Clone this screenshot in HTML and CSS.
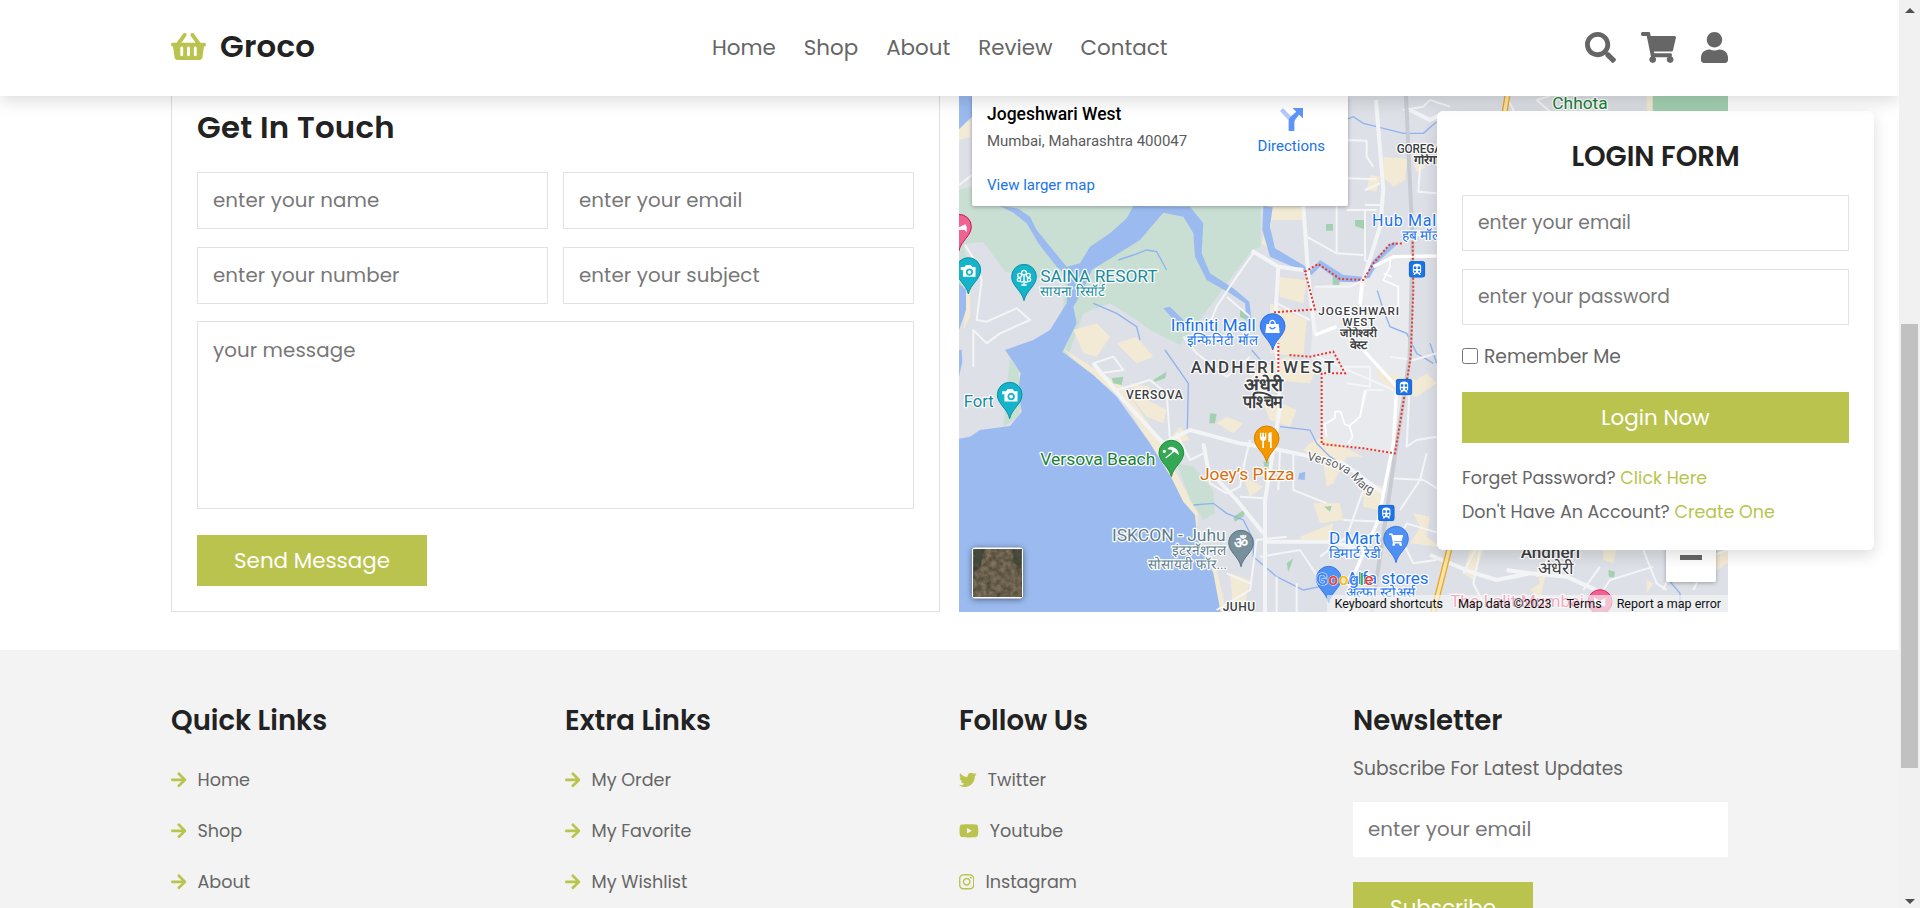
FILE: index.html
```html
<!DOCTYPE html>
<html lang="en">
<head>
<meta charset="utf-8">
<title>Groco</title>
<link rel="stylesheet" href="styles.css">
</head>
<body>
<svg class="defs" width="0" height="0" aria-hidden="true">
  <symbol id="arrow" viewBox="0 0 448 512"><path d="M190.5 66.9l22.2-22.2c9.4-9.4 24.6-9.4 33.9 0L441 239c9.4 9.4 9.4 24.6 0 33.9L246.6 467.3c-9.4 9.4-24.6 9.4-33.9 0l-22.2-22.2c-9.5-9.5-9.3-25 .4-34.3L311.4 296H24c-13.3 0-24-10.7-24-24v-32c0-13.3 10.7-24 24-24h287.4L190.9 101.2c-9.8-9.3-10-24.8-.4-34.3z"/></symbol>
  <symbol id="pin" viewBox="-38 -38 76 112" overflow="visible"><path d="M0 72C-6 42-37 28-37 0A37 37 0 0 1 37 0C37 28 6 42 0 72z"/></symbol>
  <symbol id="camera" viewBox="-24 -24 48 48"><path fill="#fff" fill-rule="evenodd" d="M-20-10H-10L-5-16H8L12-10H21V17H-14V-2H-20zM4-6a10 10 0 1 0 .1 0zM4-1a5 5 0 1 1-.1 0z"/></symbol>
  <symbol id="train" viewBox="0 0 48 48"><rect x="1" y="1" width="46" height="46" rx="8" fill="#1a73e8" stroke="#1558b8" stroke-width="2"/><path fill="#fff" fill-rule="evenodd" d="M12 16Q12 8 24 8T36 16V30Q36 34 32 35L35 40H30L27 36H21L18 40H13L16 35Q12 34 12 30zM15 16V23H22V16zM26 16V23H33V16zM18 27a3 3 0 1 0 .1 0zM30 27a3 3 0 1 0 .1 0z"/></symbol>
  <symbol id="cart" viewBox="0 0 576 512"><path d="M528.12 301.319l47.273-208C578.806 78.301 567.391 64 551.99 64H159.208l-9.166-44.81C147.758 8.021 137.93 0 126.529 0H24C10.745 0 0 10.745 0 24v16c0 13.255 10.745 24 24 24h69.883l70.248 343.435C147.325 417.1 136 435.222 136 456c0 30.928 25.072 56 56 56s56-25.072 56-56c0-15.674-6.447-29.835-16.824-40h209.647C430.447 426.165 424 440.326 424 456c0 30.928 25.072 56 56 56s56-25.072 56-56c0-22.172-12.888-41.332-31.579-50.405l5.517-24.276c3.413-15.018-8.002-29.319-23.403-29.319H218.117l-6.545-32h293.145c11.206 0 20.92-7.754 23.403-18.681z"/></symbol>
</svg>

<div class="page">
  <header class="header">
    <a class="logo"><svg class="logo-icon" viewBox="0 0 576 512"><path d="M576 216v16c0 13.255-10.745 24-24 24h-8l-26.113 182.788C514.509 462.435 494.257 480 470.37 480H105.63c-23.887 0-44.139-17.565-47.518-41.212L32 256h-8c-13.255 0-24-10.745-24-24v-16c0-13.255 10.745-24 24-24h67.341l106.78-146.821c10.395-14.292 30.407-17.453 44.701-7.058 14.293 10.395 17.453 30.408 7.058 44.701L170.477 192h235.046L326.12 82.821c-10.395-14.292-7.234-34.306 7.059-44.701 14.291-10.395 34.306-7.235 44.701 7.058L484.659 192H552c13.255 0 24 10.745 24 24zM312 392V280c0-13.255-10.745-24-24-24s-24 10.745-24 24v112c0 13.255 10.745 24 24 24s24-10.745 24-24zm112 0V280c0-13.255-10.745-24-24-24s-24 10.745-24 24v112c0 13.255 10.745 24 24 24s24-10.745 24-24zm-224 0V280c0-13.255-10.745-24-24-24s-24 10.745-24 24v112c0 13.255 10.745 24 24 24s24-10.745 24-24z"/></svg><span>Groco</span></a>
    <nav class="nav"><a>Home</a><a>Shop</a><a>About</a><a>Review</a><a>Contact</a></nav>
    <div class="icons">
      <svg class="icon-search" viewBox="0 0 512 512"><path d="M505 442.7L405.3 343c-4.5-4.5-10.6-7-17-7H372c27.6-35.3 44-79.7 44-128C416 93.1 322.9 0 208 0S0 93.1 0 208s93.1 208 208 208c48.3 0 92.7-16.4 128-44v16.3c0 6.4 2.5 12.5 7 17l99.7 99.7c9.4 9.4 24.6 9.4 33.9 0l28.3-28.3c9.4-9.4 9.4-24.6.1-34zM208 336c-70.7 0-128-57.2-128-128 0-70.7 57.2-128 128-128 70.7 0 128 57.2 128 128 0 70.7-57.2 128-128 128z"/></svg>
      <svg class="icon-cart" viewBox="0 0 576 512"><use href="#cart"/></svg>
      <svg class="icon-user" viewBox="0 0 448 512"><path d="M224 256c70.7 0 128-57.3 128-128S294.7 0 224 0 96 57.3 96 128s57.3 128 128 128zm89.6 32h-16.7c-22.2 10.2-46.9 16-72.9 16s-50.6-5.8-72.9-16h-16.7C60.2 288 0 348.2 0 422.4V464c0 26.5 21.5 48 48 48h352c26.5 0 48-21.5 48-48v-41.6c0-74.2-60.2-134.4-134.4-134.4z"/></svg>
    </div>
  </header>

  <main class="main">
    <section class="contact">
      <form class="contact-form">
        <h3 class="contact-title">Get In Touch</h3>
        <div class="fields">
          <input class="box" placeholder="enter your name">
          <input class="box" placeholder="enter your email">
          <input class="box" placeholder="enter your number">
          <input class="box" placeholder="enter your subject">
        </div>
        <textarea class="box message" placeholder="your message"></textarea>
        <button class="btn" type="button">Send Message</button>
      </form>

      <div class="map">
        <svg class="map-canvas" viewBox="27 18 2307 1548" preserveAspectRatio="none">
          <rect x="27" y="18" width="2307" height="1548" fill="#dde0e6"/>
          <!-- mangrove greens -->
          <path fill="#cadfd3" d="M27 300L60 290 160 320H932V470L905 482 740 702 690 765 620 735 560 690 480 640 400 670 350 810H27z"/>
          <path fill="#dde0e6" d="M40 462L100 456 165 545 250 560 345 575 335 690 250 760 180 790 190 830 27 830V700L60 650 66 560z"/>
          <path fill="#dde0e6" d="M400 720L440 690 600 720 700 770 740 900 480 830 370 790z"/>
          <path fill="#e8eaee" d="M1090 590L1240 570 1320 500H1390L1385 650 1350 1000 1320 1090 1115 1060V850L1080 800 1090 700z"/>
          <!-- beach and built-up blocks -->
          <g fill="#f2ead4">
            <path d="M330 770L440 840 520 890 630 1050 700 1190 745 1250 740 1330 800 1440 830 1566H800L770 1400 725 1290 640 1130 520 930 420 850z"/>
            <path d="M27 90L62 95 60 140 27 150zM50 590L62 600 60 680 40 720z"/>
            <path d="M370 720L440 700 480 740 440 800 400 790zM500 760L560 740 610 800 560 820zM540 880L600 890 590 930 650 960 640 1000 590 980 550 930z"/>
            <path d="M960 350H1060V390H965L960 480 935 460zM980 560L1070 570 1060 640 990 620zM960 640L1070 690 1060 800 960 790zM900 850L1010 800 1100 830 1080 880 960 870 950 920 1040 960 1020 1010 960 990z"/>
            <path d="M1300 200L1372 208 1365 270 1330 290 1300 262zM1260 255L1290 260 1280 305 1250 300zM1390 220L1430 230 1400 245z"/>
            <path d="M1270 840L1400 870 1430 850 1460 880 1400 920 1320 900zM1080 1060L1120 1040 1240 1100 1190 1100 1150 1180 1130 1190 1120 1120 1060 1080zM1240 1180L1310 1190 1290 1260 1240 1250zM1090 1240L1170 1240 1180 1290 1110 1300zM1050 1340L1150 1300 1140 1350 1060 1360zM1390 1270L1440 1280 1430 1340 1470 1370 1380 1360 1410 1310zM880 1160L940 1190 900 1220zM840 1450L900 1470 880 1566H850zM630 1080L690 1010 720 1050 670 1060zM830 980L880 1000 850 1030 800 1000z"/>
            <path d="M2090 18H2110V70H2090zM1990 70L2050 70 2030 100H1990zM1560 1380L1600 1380 1570 1470 1540 1450zM1740 1500L1770 1480 1760 1430 1790 1440 1770 1530zM1960 1380L2000 1370 1990 1420 1960 1410zM2090 1470L2110 1480 2090 1510zM2290 1390L2334 1380V1420L2300 1440z"/>
          </g>
          <g fill="#a3d0af"><path d="M1128 402h21v20h-21zM1215 390h28v28l-28-10zM1148 560h20v25h-20zM610 870L650 845 645 865 615 875zM485 865L520 860 515 885 490 880zM780 970L800 972 795 1000 778 1000zM940 1115H965V1137H945zM850 1280L890 1255 880 1280 855 1295zM1122 1250L1145 1248 1140 1265zM1010 1420L1030 1405 1015 1445zM870 660L890 665 888 690 870 680zM1975 1440L1995 1445 1992 1463 1977 1460z"/><path d="M2108 18H2334V100H2108z" fill="#a5d1b2"/></g>
          <path fill="#cadfd3" d="M680 1120L730 1130 790 1200 795 1270 760 1290 720 1230zM180 800L230 810 205 850 222 920 205 980 160 1010 170 900z"/>
          <!-- sea and creeks -->
          <path fill="#9bbbf0" d="M165 780L330 780 430 855 500 920 600 1060 665 1165 700 1235 735 1275 740 1330 790 1450 812 1566H27V1046L60 1040 90 1020 180 1008 215 965 205 900 212 850 190 815z"/>
          <path fill="#9bbbf0" d="M27 18H66V80L27 118zM550 348L530 385 480 430 420 470 390 520 350 530 260 420 240 380 205 356 150 348 190 368 230 400 265 460 320 530 355 560 350 640 300 720 250 750 165 780 330 800 380 700 370 650 400 600 425 540 490 500 570 450 640 368 700 380 730 430 735 500 770 570 840 610 885 640 890 700 905 690 898 635 850 595 780 550 755 490 760 400 720 350zM940 348L968 352 960 410 975 475 1085 540 1110 510 1180 555 1240 560 1270 510 1330 455 1345 460 1290 510 1260 560 1225 577 1170 575 1110 530 1085 555 960 500 937 420zM640 655L660 650 710 700 690 710zM27 580L48 600V660L27 720zM27 780H35L37 815 27 860zM1048 1150L1066 1145 1064 1170 1044 1168z"/>
          <g fill="none" stroke="#8fb3ef" stroke-width="4">
            <path d="M505 510L550 495 590 480 620 485 650 540M430 640L500 670 560 710 570 750M645 780L715 880 712 1020M905 780L940 820M990 1010L1080 1020 1100 1060 1140 1100 1200 1140M730 1245L790 1240 830 1270 880 1290 910 1350 910 1400 980 1460 1060 1500 1110 1490M1190 88L1210 80 1240 100 1300 115 1360 130 1420 130 1460 95M1282 602L1300 660 1320 710 1370 730 1400 790 1450 820M1235 568L1260 560M2160 1475L2190 1510V1566M1440 760L1460 820"/>
          </g>
          <!-- minor roads -->
          <g fill="none" stroke="#f4f5f7" stroke-width="6" stroke-linejoin="round">
            <path d="M27 285L66 255M45 465L80 520 95 570 80 690 110 695 200 655 240 690 150 730 110 760 70 720V830M430 820L490 800 520 840 450 850zM500 900L600 870 650 910 660 1050M780 700L800 650 860 560 910 490M700 740L740 790 830 860 900 800M830 620L900 680M1070 440L1160 490 1240 495M1160 348V490M1190 150L1250 152 1250 200 1270 230M1190 265L1280 268M1245 300L1290 280M1245 345H1290M1190 360H1280M1245 360V510L1260 520M1360 60L1420 50 1440 30 1500 50M1410 230L1405 305 1460 310M1360 430L1450 440M1095 590L1200 590 1240 570M1095 735L1150 710M1100 800L1240 860 1330 900M980 640L1080 690M760 1060L780 1180 830 1210 870 1190 890 1090M680 1030L720 1110 760 1090M870 1220L940 1225M900 1050L880 1130M990 1080L985 1200M1030 1090V1200L1130 1240M800 1560L900 1500 920 1350 1010 1340M900 1480L830 1450M930 1400L1050 1380 1110 1470M980 1566V1460M1040 1566V1480M1110 1400L1190 1340 1240 1200M1180 1290L1300 1295M1190 880L1260 890 1260 830 1180 830M1320 800L1390 810 1460 790M1380 870L1370 1070 1400 1050 1460 1040M1320 1165L1420 1170 1470 1200M1350 1260L1410 1170 1430 1090M1345 1350L1370 1300 1470 1330M1360 1360L1390 1420 1460 1410M1250 900L1300 900M1250 900L1230 980"/>
            <path d="M1540 1450L1580 1370M1590 1380L1570 1480 1600 1540M1760 1460L1810 1380M1900 1500L1950 1430M1960 1500L1980 1470 2110 1430M2080 1380L2120 1480 2150 1500M2160 1450L2140 1500M2230 1500L2280 1400 2334 1380M1710 100L1670 20M1830 90L1760 30 1800 18M1990 80L2050 70"/>
          </g>
          <g stroke="#c8cbd1" stroke-width="12" fill="none"><path d="M1368 18L1376 200 1388 450 1380 800 1340 1060 1320 1200 1290 1400 1265 1566"/></g>
          <g stroke="#f3f4f6" stroke-width="12" fill="none" stroke-linejoin="round">
            <path d="M1278 30L1300 300 1290 410 1240 570 1230 640M1060 348L1075 560 1095 735M985 530L975 700 990 950 970 1080 945 1230V1566M430 820L520 930 640 1060 720 1020 870 1060 990 1080 1180 1120 1300 1210M760 1060L775 1140 860 1230 940 1330M940 1355H1140L1240 1380M905 482L985 530 1060 540M1440 1395L1560 1445 1640 1470 1740 1450 1850 1460 1960 1510M1670 1440L1740 1450M1380 60L1440 90 1480 70"/>
          </g>
          <g stroke="#fff" stroke-width="10" fill="none" stroke-linejoin="round"><path d="M1240 780L1340 890 1330 1060 1310 1160 1285 1290 1200 1480 1190 1566M1095 735L1160 710M1235 580L1230 650M1270 530L1330 500 1460 498"/></g>
          <g stroke="#fff" stroke-width="5" fill="none" stroke-linejoin="round"><path d="M1320 500V530L1300 570 1345 590V670M1300 550L1325 560M1130 1040L1124 1002 1155 985V965H1172L1184 1003 1198 1008 1230 980 1245 900M1198 1008L1208 1040 1195 1060"/></g>
          <g stroke="#e8a825" fill="none" stroke-width="18"><path d="M1505 1350L1450 1566M1672 18L1655 120"/></g>
          <g stroke="#fbe4a9" fill="none" stroke-width="10"><path d="M1505 1350L1450 1566M1672 18L1655 120"/></g>
          <path fill="none" stroke="#e8372c" stroke-width="6" stroke-dasharray="6 6" d="M1388 455L1390 600 1382 800 1350 1000 1335 1090 1240 1075 1115 1062V850H1185L1150 785 1080 800 1015 795M985 870V760M972 667L1095 658 1065 545 1105 522 1170 567 1240 570 1270 520 1320 462 1360 460"/>

          <!-- place labels -->
          <g class="label" font-size="48">
            <g fill="#188a9c"><text x="271" y="577" textLength="352" lengthAdjust="spacingAndGlyphs">SAINA RESORT</text><text x="270" y="618" font-size="41" textLength="195" lengthAdjust="spacingAndGlyphs">सायना रिसॉर्ट</text><text x="41" y="950" textLength="90" lengthAdjust="spacingAndGlyphs">Fort</text></g>
            <g fill="#1a73e8"><text x="662" y="722" textLength="255" lengthAdjust="spacingAndGlyphs">Infiniti Mall</text><text x="710" y="764" font-size="41" textLength="214" lengthAdjust="spacingAndGlyphs">इन्फिनिटी मॉल</text><text x="1266" y="407" textLength="206">Hub Mall</text><text x="1355" y="450" font-size="41" textLength="118" lengthAdjust="spacingAndGlyphs">हब मॉल</text><text x="1137" y="1362" textLength="154" lengthAdjust="spacingAndGlyphs">D Mart</text><text x="1137" y="1404" font-size="41" textLength="158" lengthAdjust="spacingAndGlyphs">डिमार्ट रेडी</text></g>
            <g fill="#188038"><text x="271" y="1125" textLength="345" lengthAdjust="spacingAndGlyphs">Versova Beach</text><text x="1807" y="58" textLength="166" lengthAdjust="spacingAndGlyphs">Chhota</text></g>
            <text fill="#d56e0c" x="750" y="1170" textLength="283" lengthAdjust="spacingAndGlyphs">Joey’s Pizza</text>
            <g fill="#607d8b"><text x="486" y="1353" textLength="341" lengthAdjust="spacingAndGlyphs">ISKCON - Juhu</text><text x="667" y="1396" font-size="41" textLength="162" lengthAdjust="spacingAndGlyphs">इंटरनॅशनल</text><text x="595" y="1436" font-size="41" textLength="236" lengthAdjust="spacingAndGlyphs">सोसायटी फॉर...</text></g>
            <g fill="#3c4043" font-weight="500">
              <text x="1105" y="674" font-size="35" textLength="242">JOGESHWARI</text><text x="1170" y="742" font-size="35" font-weight="600" textLength="110" lengthAdjust="spacingAndGlyphs">जोगेश्वरी</text><text x="1199" y="776" font-size="35" font-weight="600" textLength="54" lengthAdjust="spacingAndGlyphs">वेस्ट</text><text x="1177" y="708" font-size="35" textLength="98">WEST</text>
              <text x="881" y="902" font-size="54" font-weight="600" textLength="120" lengthAdjust="spacingAndGlyphs">अंधेरी</text><text x="722" y="850" font-size="51" textLength="431">ANDHERI WEST</text><text x="879" y="953" font-size="54" font-weight="600" textLength="121" lengthAdjust="spacingAndGlyphs">पश्चिम</text>
              <text x="528" y="927" font-size="36" textLength="170">VERSOVA</text><text x="818" y="1564" font-size="36" textLength="97">JUHU</text>
              <text x="1392" y="222" font-size="37" font-weight="600">गोरेगाव</text><text x="1340" y="189" font-size="36" textLength="160">GOREGAO</text>
              <text x="1712" y="1403" font-size="50" textLength="178" lengthAdjust="spacingAndGlyphs">Andheri</text><text x="1763" y="1453" font-size="50" textLength="108" lengthAdjust="spacingAndGlyphs">अंधेरी</text>
            </g>
            <path id="marg" fill="none" stroke="none" d="M1070 1110Q1180 1132 1210 1170T1272 1215"/>
            <text fill="#5f6368" font-size="37"><textPath href="#marg" textLength="226">Versova Marg</textPath></text>
          </g>

          <g stroke-width="3">
            <use href="#pin" x="-11" y="372" width="76" height="112" fill="#f06292" stroke="#c2185b"/>
            <path fill="#fff" stroke="none" d="M27 412L46 403 50 410V427L44 420H27z"/>
            <use href="#pin" x="17" y="502" width="76" height="112" fill="#14b4cb" stroke="#0e8fa3"/><use href="#camera" x="28" y="516" width="52" height="52"/>
            <use href="#pin" x="184" y="522" width="76" height="112" fill="#14b4cb" stroke="#0e8fa3"/>
            <use href="#pin" x="141" y="876" width="76" height="112" fill="#14b4cb" stroke="#0e8fa3"/><use href="#camera" x="152" y="888" width="54" height="54"/>
            <use href="#pin" x="930" y="670" width="76" height="112" fill="#4285f4" stroke="#2f6fd8"/>
            <use href="#pin" x="626" y="1050" width="76" height="112" fill="#34a853" stroke="#1e8e3e"/>
            <use href="#pin" x="912" y="1007" width="76" height="112" fill="#f29900" stroke="#d67e00"/>
            <use href="#pin" x="835" y="1320" width="76" height="112" fill="#78909c" stroke="#5c7480"/>
            <use href="#pin" x="1300" y="1308" width="76" height="112" fill="#4f90f5" stroke="#3c7be0"/>
            <use href="#pin" x="1098" y="1428" width="76" height="112" fill="#4f90f5" stroke="#3c7be0"/>
          </g>
          <g fill="none" stroke="#fff" stroke-width="4">
            <circle cx="222" cy="548" r="7"/><circle cx="209" cy="556" r="6"/><circle cx="235" cy="556" r="6"/><circle cx="207" cy="569" r="5"/><circle cx="237" cy="569" r="5"/><path d="M222 556V584M211 575Q222 578 222 570Q224 580 234 575M214 585H230"/>
            <path fill="#fff" stroke="none" d="M949 702H986L989 729H946z"/><path d="M959 703Q959 691 967 691T976 703"/><path stroke="#4285f4" d="M959 711Q967 722 976 711"/>
            <path fill="#fff" stroke="none" d="M930 1028h4v12h3v-12h5v12h3v-12h4v18q-2 6-7 7v21h-5v-21q-7-2-7-9zM955 1030q3-3 10-3v47h-5v-19h-5z"/>
            <path fill="#fff" stroke="none" d="M652 1078Q656 1068 668 1071Q686 1076 687 1096L673 1085 668 1086 664 1079z"/><path d="M674 1082L647 1104"/><circle cx="643" cy="1084" r="3" fill="#fff"/>
          </g>
          <text x="873" y="1373" fill="#fff" text-anchor="middle" font-size="46" font-weight="700">ॐ</text>
          <use href="#cart" x="1317" y="1329" width="42" height="40" fill="#fff"/>
          <use href="#train" x="1376" y="513" width="50" height="50"/><use href="#train" x="1337" y="866" width="50" height="50"/><use href="#train" x="1284" y="1244" width="50" height="50"/>
          <g class="label" font-size="48" fill="#1a73e8"><text x="1187" y="1522" font-size="41" textLength="208" lengthAdjust="spacingAndGlyphs">अल्फा स्टोअर्स</text><text x="1190" y="1483" textLength="246" lengthAdjust="spacingAndGlyphs">Alfa stores</text></g>
          <text class="label" x="1500" y="1550" font-size="52" fill="#e91e63" textLength="402" lengthAdjust="spacingAndGlyphs">The Lalit Mumbai</text>
          <circle cx="1950" cy="1535" r="36" fill="#f06292" stroke="#e91e63" stroke-width="3"/>
          <path fill="#fff" d="M1932 1522L1950 1532 1966 1524V1548H1932z"/>
          <text class="google" x="1098" y="1484" font-size="52" font-weight="500" textLength="173"><tspan fill="#4285f4">G</tspan><tspan fill="#ea4335">o</tspan><tspan fill="#fbbc04">o</tspan><tspan fill="#4285f4">g</tspan><tspan fill="#34a853">l</tspan><tspan fill="#ea4335">e</tspan></text>
        </svg>
        <div class="place-card">
          <div class="place-text"><strong>Jogeshwari West</strong><span>Mumbai, Maharashtra 400047</span><a>View larger map</a></div>
          <a class="directions"><svg viewBox="0 0 24 24"><path fill="#b4cafb" d="M0 3L3 0 12 9 9 13z"/><path fill="#5e94fa" d="M13 0h11v11l-4-4-4 5q-1 1-1 3v9H9v-10q0-3 2-5l6-5z"/></svg>Directions</a>
        </div>
        <svg class="satellite" viewBox="0 0 52 52"><defs><filter id="ground" x="0" y="0" width="1" height="1" color-interpolation-filters="sRGB"><feTurbulence type="fractalNoise" baseFrequency=".2" numOctaves="4" seed="4"/><feColorMatrix values=".3 0 0 0 .26 .28 0 0 0 .23 .25 0 0 0 .17 0 0 0 0 1"/></filter></defs><rect width="52" height="52" rx="3" fill="#fff"/><rect x="2" y="2" width="48" height="48" filter="url(#ground)"/><path fill="#2c3c31" opacity=".6" d="M2 2H13L8 20 2 26zM41 2H50V22L43 16z"/></svg>
        <div class="zoom-out"><i></i></div>
        <div class="credits"><span>Keyboard shortcuts</span><span>Map data ©2023</span><span>Terms</span><span>Report a map error</span></div>
      </div>
    </section>

    <footer class="footer">
      <div class="column"><h3>Quick Links</h3>
        <a><svg class="i-arrow"><use href="#arrow"/></svg><span>Home</span></a><a><svg class="i-arrow"><use href="#arrow"/></svg><span>Shop</span></a><a><svg class="i-arrow"><use href="#arrow"/></svg><span>About</span></a></div>
      <div class="column"><h3>Extra Links</h3>
        <a><svg class="i-arrow"><use href="#arrow"/></svg><span>My Order</span></a><a><svg class="i-arrow"><use href="#arrow"/></svg><span>My Favorite</span></a><a><svg class="i-arrow"><use href="#arrow"/></svg><span>My Wishlist</span></a></div>
      <div class="column"><h3>Follow Us</h3>
        <a><svg class="i-twitter" viewBox="0 0 512 512"><path d="M459.37 151.716c.325 4.548.325 9.097.325 13.645 0 138.72-105.583 298.558-298.558 298.558-59.452 0-114.68-17.219-161.137-47.106 8.447.974 16.568 1.299 25.34 1.299 49.055 0 94.213-16.568 130.274-44.832-46.132-.975-84.792-31.188-98.112-72.772 6.498.974 12.995 1.624 19.818 1.624 9.421 0 18.843-1.3 27.614-3.573-48.081-9.747-84.143-51.98-84.143-102.985v-1.299c13.969 7.797 30.214 12.67 47.431 13.319-28.264-18.843-46.781-51.005-46.781-87.391 0-19.492 5.197-37.36 14.294-52.954 51.655 63.675 129.3 105.258 216.365 109.807-1.624-7.797-2.599-15.918-2.599-24.04 0-57.828 46.782-104.934 104.934-104.934 30.213 0 57.502 12.67 76.67 33.137 23.715-4.548 46.456-13.32 66.599-25.34-7.798 24.366-24.366 44.833-46.132 57.827 21.117-2.273 41.584-8.122 60.426-16.243-14.292 20.791-32.161 39.308-52.628 54.253z"/></svg><span>Twitter</span></a>
        <a><svg class="i-youtube" viewBox="0 0 576 512"><path d="M549.655 124.083c-6.281-23.65-24.787-42.276-48.284-48.597C458.781 64 288 64 288 64S117.22 64 74.629 75.486c-23.497 6.322-42.003 24.947-48.284 48.597-11.412 42.867-11.412 132.305-11.412 132.305s0 89.438 11.412 132.305c6.281 23.65 24.787 41.5 48.284 47.821C117.22 448 288 448 288 448s170.78 0 213.371-11.486c23.497-6.321 42.003-24.171 48.284-47.821 11.412-42.867 11.412-132.305 11.412-132.305s0-89.438-11.412-132.305zm-317.51 213.508V175.185l142.739 81.205-142.739 81.201z"/></svg><span>Youtube</span></a>
        <a><svg class="i-instagram" viewBox="0 0 448 512"><path d="M224.1 141c-63.6 0-114.9 51.3-114.9 114.9s51.3 114.9 114.9 114.9S339 319.5 339 255.9 287.7 141 224.1 141zm0 189.6c-41.1 0-74.7-33.5-74.7-74.7s33.5-74.7 74.7-74.7 74.7 33.5 74.7 74.7-33.6 74.7-74.7 74.7zm146.4-194.3c0 14.9-12 26.8-26.8 26.8-14.9 0-26.8-12-26.8-26.8s12-26.8 26.8-26.8 26.8 12 26.8 26.8zm76.1 27.2c-1.7-35.9-9.9-67.7-36.2-93.9-26.2-26.2-58-34.4-93.9-36.2-37-2.1-147.9-2.1-184.9 0-35.8 1.7-67.6 9.9-93.9 36.1s-34.4 58-36.2 93.9c-2.1 37-2.1 147.9 0 184.9 1.7 35.9 9.9 67.7 36.2 93.9s58 34.4 93.9 36.2c37 2.1 147.9 2.1 184.9 0 35.9-1.7 67.7-9.9 93.9-36.2 26.2-26.2 34.4-58 36.2-93.9 2.1-37 2.1-147.8 0-184.8zM398.8 388c-7.8 19.6-22.9 34.7-42.6 42.6-29.5 11.7-99.5 9-132.1 9s-102.7 2.6-132.1-9c-19.6-7.8-34.7-22.9-42.6-42.6-11.7-29.5-9-99.5-9-132.1s-2.6-102.7 9-132.1c7.8-19.6 22.9-34.7 42.6-42.6 29.5-11.7 99.5-9 132.1-9s102.7-2.6 132.1 9c19.6 7.8 34.7 22.9 42.6 42.6 11.7 29.5 9 99.5 9 132.1s2.7 102.7-9 132.1z"/></svg><span>Instagram</span></a></div>
      <div class="column newsletter"><h3>Newsletter</h3><p>Subscribe For Latest Updates</p><input class="box" placeholder="enter your email"><button class="btn" type="button">Subscribe</button></div>
    </footer>

    <form class="login">
      <h3>LOGIN FORM</h3>
      <input class="box" placeholder="enter your email">
      <input class="box" placeholder="enter your password">
      <label class="remember"><input type="checkbox"><span>Remember Me</span></label>
      <button class="btn" type="button">Login Now</button>
      <p>Forget Password? <a>Click Here</a></p>
      <p>Don't Have An Account? <a>Create One</a></p>
    </form>
  </main>
</div>
<div class="scrollbar"><i class="up"></i><div class="thumb"></div><i class="down"></i></div>
</body>
</html>
```
FILE: styles.css
```css
* { box-sizing: border-box; margin: 0; padding: 0; }
body { display: flex; width: 1920px; height: 908px; overflow: hidden; background: #fff; font-family: Poppins, Inter, sans-serif; color: #666; }
.defs { position: absolute; }
input, textarea, button { font: inherit; letter-spacing: inherit; border-radius: 0; outline: none; }
.page { width: 1899px; height: 908px; display: flex; flex-direction: column; overflow: hidden; }
.header { position: relative; z-index: 3; flex: none; height: 96px; padding: 0 171px 2px; background: #fff; box-shadow: 0 5px 16px rgba(0,0,0,.14); display: flex; align-items: center; }
.logo { display: flex; align-items: center; width: 541px; color: #222; font-size: 30.8px; font-weight: 600; letter-spacing: .008em; }
.logo-icon { width: 35px; height: 31px; margin: 0 14px 2px 0; fill: #bac34e; }
.nav { display: flex; gap: 28px; font-size: 21.4px; }
.icons { display: flex; margin-left: auto; gap: 25px; fill: #666; }
.icons svg { height: 31px; }
.icon-search { width: 31px; }
.icon-cart { width: 35px; }
.icon-user { width: 27px; }

.main { position: relative; flex: 1; min-height: 0; overflow: hidden; }
.contact { height: 554px; padding: 0 171px 38px; display: grid; grid-template-columns: 769px 769px; gap: 19px; }
.contact-form { border: 1px solid #e0e0e0; border-top: 0; padding: 8px 25px 25px; }
.contact-title { height: 68px; line-height: 48px; color: #222; font-size: 30.8px; font-weight: 600; letter-spacing: .008em; }
.fields { display: grid; grid-template-columns: 1fr 1fr; gap: 18px 15px; }
.box { display: block; width: 100%; height: 57px; border: 1px solid #e2e2e2; padding: 0 15px 1px; background: #fff; font-size: 19.8px; letter-spacing: .005em; color: #666; }
.box::placeholder { color: #777; opacity: 1; }
.message { height: 188px; margin: 17px 0 26px; padding: 13px 15px; resize: none; line-height: 31px; }
.btn { display: block; width: 230px; height: 51px; border: 0; background: #bac34e; color: #fff; font-size: 21.4px; line-height: 51px; white-space: nowrap; }

.map { position: relative; height: 516px; overflow: hidden; font-family: Roboto, sans-serif; }
.map-canvas { display: block; width: 769px; height: 516px; }
.label { paint-order: stroke; stroke: #fff; stroke-width: 7px; stroke-linejoin: round; }
.google { paint-order: stroke; stroke: #fff; stroke-width: 3px; }
.place-card { position: absolute; left: 13px; top: 0; width: 376px; height: 110px; padding: 7px 23px 0 15px; background: #fff; border-radius: 0 0 2px 2px; box-shadow: 0 1px 4px rgba(0,0,0,.3); display: flex; justify-content: space-between; font-size: 15px; color: #5b5b5b; }
.place-text { display: flex; flex-direction: column; }
.place-text strong { height: 28px; line-height: 22px; font-size: 17.5px; font-weight: 500; color: #000; }
.place-text span { height: 43px; line-height: 20px; }
.place-text a, .directions { color: #1a73e8; line-height: 22px; }
.directions { display: flex; flex-direction: column; align-items: center; gap: 4px; padding-top: 5px; }
.directions svg { width: 23px; height: 23px; }
.satellite { position: absolute; left: 13px; bottom: 13px; width: 51px; height: 52px; filter: drop-shadow(0 1px 3px rgba(0,0,0,.5)); }
.zoom-out { position: absolute; right: 12px; bottom: 30px; width: 50px; height: 58px; padding: 31px 14px 0; background: #fff; border-radius: 2px; box-shadow: 0 1px 4px rgba(0,0,0,.3); }
.zoom-out i { display: block; height: 5px; background: #666; }
.credits { position: absolute; right: 0; bottom: 0; height: 17px; padding: 0 7px; background: rgba(245,245,245,.66); color: #111; display: flex; gap: 15px; font-size: 12.5px; line-height: 17px; white-space: nowrap; }

.footer { height: 300px; padding: 51px 171px 0; background: #f3f3f3; display: grid; grid-template-columns: repeat(4, 375px); gap: 19px; align-items: start; }
.column h3 { height: 57px; line-height: 39px; color: #222; font-size: 27.5px; font-weight: 600; letter-spacing: 0; }
.column a { display: flex; align-items: center; height: 51px; padding-bottom: 7px; font-size: 17.6px; }
.column a svg { height: 17.6px; margin-right: 11px; fill: #bac34e; }
.i-arrow { width: 15.5px; }
.i-twitter { width: 17.6px; }
.i-youtube { width: 19.8px; }
.i-instagram { width: 15.4px; }
.newsletter p { height: 44px; line-height: 22px; font-size: 18.7px; }
.newsletter .box { height: 55px; border: 0; margin-bottom: 25px; }
.newsletter .btn { width: 180px; }

.login { position: absolute; z-index: 2; left: 1437px; top: 15px; width: 437px; height: 439px; padding: 25px; border-radius: 6px; background: #fff; box-shadow: 0 5px 16px rgba(0,0,0,.14); }
.login h3 { height: 59px; line-height: 42px; text-align: center; font-size: 27.5px; font-weight: 600; color: #222; }
.login .box { height: 56px; margin-bottom: 18px; font-size: 18.7px; letter-spacing: 0; }
.remember { display: flex; align-items: center; gap: 6px; height: 26px; margin-bottom: 23px; font-size: 18.7px; }
.remember input { width: 16px; height: 16px; }
.login .btn { width: 387px; margin-bottom: 18px; }
.login p { height: 34px; line-height: 34px; font-size: 17.5px; white-space: nowrap; }
.login p a { color: #bac34e; }

.scrollbar { width: 21px; height: 908px; background: #f1f1f1; padding: 8px 2px; display: flex; flex-direction: column; }
.scrollbar i { width: 0; margin: 0 4px; border: 5px solid transparent; }
.scrollbar .up { border-top: 0; border-bottom-color: #505050; }
.scrollbar .down { border-bottom: 0; border-top-color: #505050; margin-top: 131px; }
.thumb { flex: none; width: 17px; height: 444px; margin-top: 311px; background: #c1c1c1; }
```
